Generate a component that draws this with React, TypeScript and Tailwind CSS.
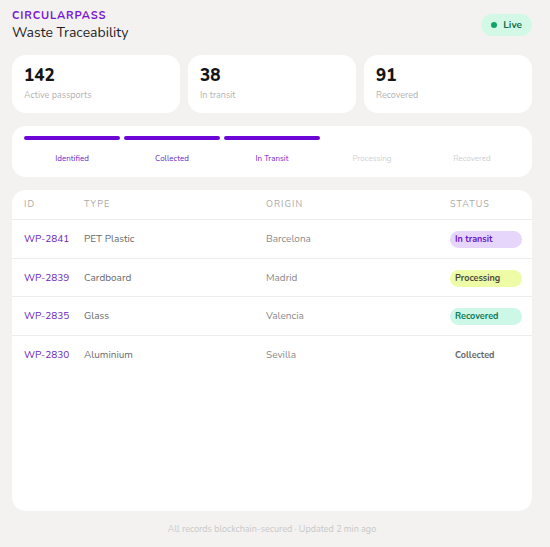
import React from "react";

const stats = [
  { value: "142", label: "Active passports" },
  { value: "38", label: "In transit" },
  { value: "91", label: "Recovered" },
];

const steps = [
  { label: "Identified", done: true },
  { label: "Collected", done: true },
  { label: "In Transit", done: true },
  { label: "Processing", done: false },
  { label: "Recovered", done: false },
];

type Status = "In transit" | "Processing" | "Recovered" | "Collected";

const rows: { id: string; type: string; origin: string; status: Status }[] = [
  { id: "WP-2841", type: "PET Plastic", origin: "Barcelona", status: "In transit" },
  { id: "WP-2839", type: "Cardboard", origin: "Madrid", status: "Processing" },
  { id: "WP-2835", type: "Glass", origin: "Valencia", status: "Recovered" },
  { id: "WP-2830", type: "Aluminium", origin: "Sevilla", status: "Collected" },
];

const pill: Record<Status, string> = {
  "In transit": "bg-[#e6d6fb] text-[#6a12c9]",
  Processing: "bg-[#eefca8] text-[#4a4a3a]",
  Recovered: "bg-[#cdf7e6] text-[#0f7a55]",
  Collected: "text-[#666]",
};

export default function App() {
  return (
    <div
      className="min-h-[547px] bg-[#f4f2f0] px-3 pt-[9px] pb-2 flex flex-col"
      style={{ fontFamily: "Nunito, Lato, 'Open Sans', sans-serif" }}
    >
      {/* header */}
      <div className="flex items-start justify-between">
        <div>
          <div className="text-[11px] font-bold tracking-[0.08em] text-[#7a16d6] leading-[14px]">CIRCULARPASS</div>
          <div className="text-[14px] text-[#1f1f1f] leading-[18px] mt-[1px]">Waste Traceability</div>
        </div>
        <div className="mt-[5px] mr-[6px] flex items-center gap-[6px] rounded-full bg-[#d3f9e6] px-[10px] h-[22px] text-[10px] font-bold text-[#166b4a]">
          <span className="h-[6px] w-[6px] rounded-full bg-[#12a36a]" />
          Live
        </div>
      </div>

      {/* stats */}
      <div className="mt-[13px] grid grid-cols-3 gap-2 pr-[6px]">
        {stats.map((s) => (
          <div key={s.label} className="h-[58px] rounded-[14px] bg-white px-3 pt-[11px]">
            <div className="text-[17px] font-extrabold leading-[20px] text-[#151515]">{s.value}</div>
            <div className="text-[9px] text-[#b3b3b3] mt-[3px]">{s.label}</div>
          </div>
        ))}
      </div>

      {/* progress */}
      <div className="mt-[13px] mr-[6px] h-[51px] rounded-[14px] bg-white px-3 pt-[10px]">
        <div className="grid grid-cols-5 gap-1">
          {steps.map((s) => (
            <div key={s.label} className="flex flex-col items-center">
              <div className={`h-[4px] w-full rounded-full ${s.done ? "bg-[#6b06d6]" : "bg-transparent"}`} />
              <div className={`mt-[14px] text-[8px] leading-[10px] ${s.done ? "text-[#6b1fc8]" : "text-[#cfcfcf]"}`}>
                {s.label}
              </div>
            </div>
          ))}
        </div>
      </div>

      {/* table */}
      <div className="mt-[13px] mr-[6px] h-[321px] rounded-[14px] bg-white">
        <div className="grid grid-cols-[60px_182px_184px_1fr] items-center h-[30px] px-3 text-[9px] tracking-[0.12em] text-[#a8a8a8] border-b border-[#ececec]">
          <div>ID</div>
          <div>TYPE</div>
          <div>ORIGIN</div>
          <div>STATUS</div>
        </div>
        {rows.map((r, i) => (
          <div
            key={r.id}
            className={`grid grid-cols-[60px_182px_184px_1fr] items-center h-[38.5px] px-3 pt-[2px] text-[10px] ${
              i < rows.length - 1 ? "border-b border-[#ececec]" : ""
            }`}
          >
            <div className="text-[#6a1cc4] text-[10px]">{r.id}</div>
            <div className="text-[#6a6a6a]">{r.type}</div>
            <div className="text-[#8a8a8a]">{r.origin}</div>
            <div>
              <span
                className={`inline-flex items-center h-[17px] w-[72px] rounded-full px-[5px] text-[9px] font-bold ${pill[r.status]}`}
              >
                {r.status}
              </span>
            </div>
          </div>
        ))}
      </div>

      <div className="mt-[12px] text-center text-[9px] text-[#c8c8c8] pr-[6px]">
        All records blockchain-secured · Updated 2 min ago
      </div>
    </div>
  );
}
